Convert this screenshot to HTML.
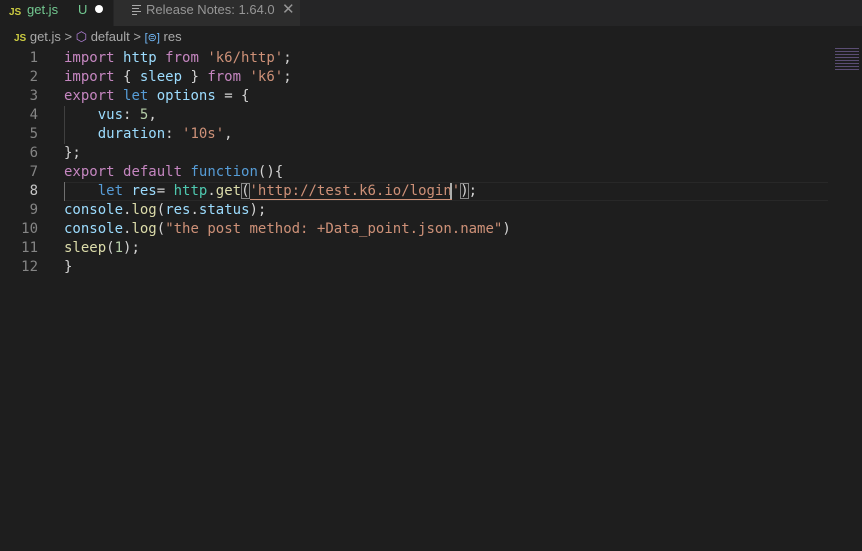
<!DOCTYPE html>
<html><head><style>
body{margin:0;width:862px;height:551px;background:#1e1e1e;overflow:hidden;font-family:"Liberation Sans",sans-serif;position:relative}
.tabs{position:absolute;top:0;left:0;width:862px;height:26px;background:#252526}
.tab{position:absolute;top:0;height:26px;font-size:13px;line-height:18px;color:#969696}
.bc{position:absolute;top:28px;left:14px;font-size:13px;color:#a9a9a9;line-height:18px}
.code{position:absolute;left:0;top:49px;font-family:"DejaVu Sans Mono",monospace;font-size:14px;line-height:19px;white-space:pre;color:#d4d4d4}
.ln{position:absolute;left:0;width:38px;text-align:right;color:#858585}
.l{position:absolute;left:64px}
.k{color:#c586c0}.b{color:#569cd6}.v{color:#9cdcfe}.s{color:#ce9178}.f{color:#dcdcaa}.n{color:#b5cea8}.t{color:#4ec9b0}
</style></head><body>
<div class="tabs">
 <div class="tab" style="left:0;width:113px;background:#1e1e1e">
  <span style="position:absolute;left:9px;top:4px;color:#cbcb41;font-size:10px;font-weight:bold">JS</span>
  <span style="position:absolute;left:27px;top:1px;color:#73c991">get.js</span>
  <span style="position:absolute;left:78px;top:1px;color:#73c991">U</span>
  <span style="position:absolute;left:95px;top:5px;width:8px;height:8px;border-radius:50%;background:#fff"></span>
 </div>
 <div class="tab" style="left:114px;width:186px;background:#2d2d2d">
  <span style="position:absolute;left:18px;top:5px;width:9px;border-top:1px solid #aaa;height:1px"></span>
  <span style="position:absolute;left:18px;top:8px;width:7px;border-top:1px solid #aaa"></span>
  <span style="position:absolute;left:18px;top:11px;width:9px;border-top:1px solid #aaa"></span>
  <span style="position:absolute;left:18px;top:14px;width:5px;border-top:1px solid #aaa"></span>
  <span style="position:absolute;left:32px;top:1px">Release Notes: 1.64.0</span>
  <span style="position:absolute;left:168px;top:1px;font-size:15px">✕</span>
 </div>
</div>
<div class="bc"><span style="color:#cbcb41;font-size:10px;font-weight:bold">JS</span> get.js &gt; <span style="color:#b180d7">⬡</span> default &gt; <span style="color:#75beff;font-size:11px">[⊜]</span> res</div>
<div class="code">
<div style="position:absolute;left:64px;top:133px;width:764px;height:19px;border-top:1px solid #282828;border-bottom:1px solid #282828;box-sizing:border-box"></div>
<div style="position:absolute;left:64px;top:133px;width:1px;height:19px;background:#707070"></div>
<div style="position:absolute;left:64px;top:57px;width:1px;height:38px;background:#404040"></div>
<div class="ln" style="top:0">1</div><div class="l" style="top:0"><span class="k">import</span> <span class="v">http</span> <span class="k">from</span> <span class="s">'k6/http'</span>;</div>
<div class="ln" style="top:19px">2</div><div class="l" style="top:19px"><span class="k">import</span> { <span class="v">sleep</span> } <span class="k">from</span> <span class="s">'k6'</span>;</div>
<div class="ln" style="top:38px">3</div><div class="l" style="top:38px"><span class="k">export</span> <span class="b">let</span> <span class="v">options</span> = {</div>
<div class="ln" style="top:57px">4</div><div class="l" style="top:57px">    <span class="v">vus</span>: <span class="n">5</span>,</div>
<div class="ln" style="top:76px">5</div><div class="l" style="top:76px">    <span class="v">duration</span>: <span class="s">'10s'</span>,</div>
<div class="ln" style="top:95px">6</div><div class="l" style="top:95px">};</div>
<div class="ln" style="top:114px">7</div><div class="l" style="top:114px"><span class="k">export</span> <span class="k">default</span> <span class="b">function</span>(){</div>
<div class="ln" style="top:133px;color:#c6c6c6">8</div><div class="l" style="top:133px">    <span class="b">let</span> <span class="v">res</span>= <span class="t">http</span>.<span class="f">get</span><span style="outline:1px solid #888;outline-offset:-1px">(</span><span class="s" style="border-bottom:1px solid #ce9178">'http://test.k6.io/login</span><span style="border-left:2px solid #aeafad;margin-left:-2px"></span><span class="s">'</span><span style="outline:1px solid #888;outline-offset:-1px">)</span>;</div>
<div class="ln" style="top:152px">9</div><div class="l" style="top:152px"><span class="v">console</span>.<span class="f">log</span>(<span class="v">res</span>.<span class="v">status</span>);</div>
<div class="ln" style="top:171px">10</div><div class="l" style="top:171px"><span class="v">console</span>.<span class="f">log</span>(<span class="s">"the post method: +Data_point.json.name"</span>)</div>
<div class="ln" style="top:190px">11</div><div class="l" style="top:190px"><span class="f">sleep</span>(<span class="n">1</span>);</div>
<div class="ln" style="top:209px">12</div><div class="l" style="top:209px">}</div>
</div>
<div style="position:absolute;left:835px;top:48px;width:24px;height:22px;background:repeating-linear-gradient(#6a5a8a 0 1px,transparent 1px 3px);opacity:.8"></div>
</body></html>
